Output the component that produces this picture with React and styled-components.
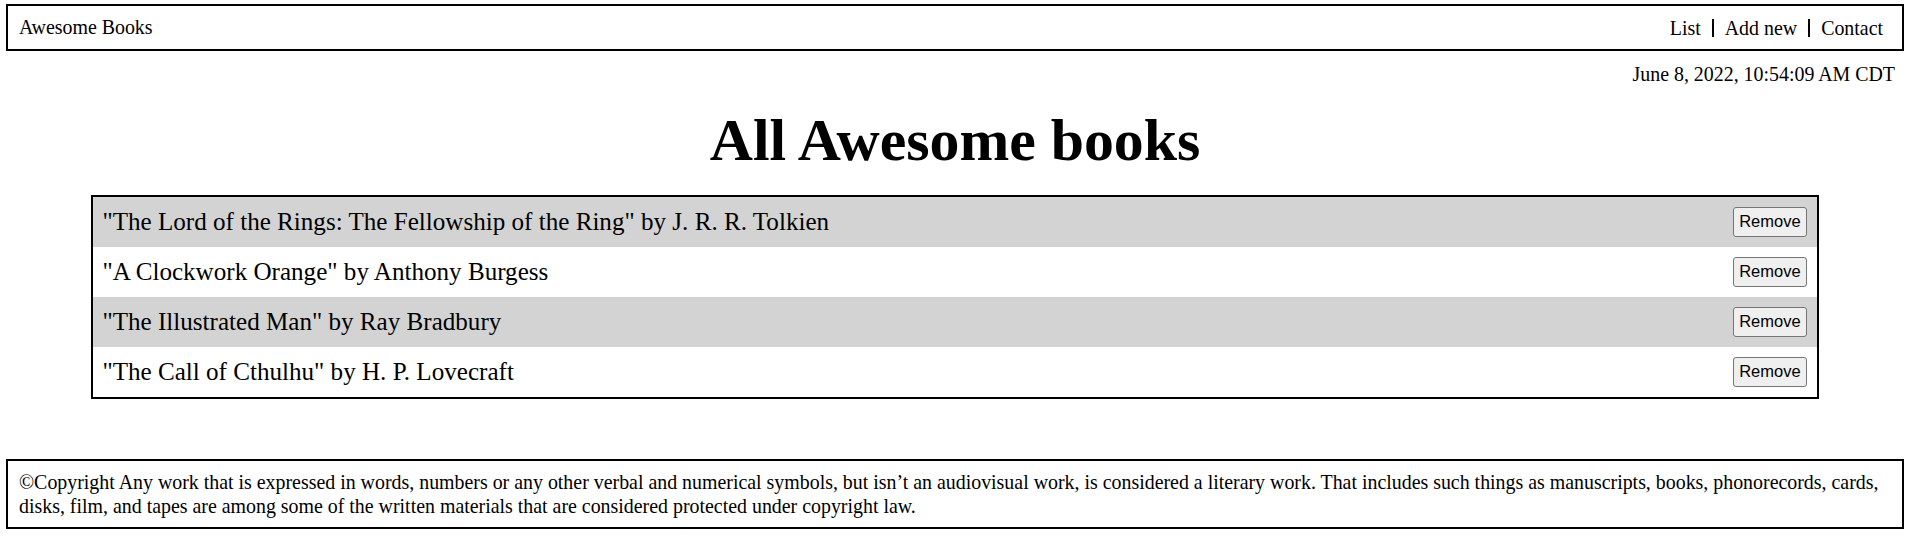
import React from "react";
import styled, { createGlobalStyle } from "styled-components";

const GlobalStyle = createGlobalStyle`
    body {
        margin: 0;
        font-family: "Liberation Serif", "Times New Roman", serif;
        color: #000;
        background: #fff;
    }
`;

const Page = styled.div`
    padding: 4px 6px 0;
`;

/**
 * Top bar with the brand on the left and the nav links on the right.
 */
const Header = styled.header`
    box-sizing: border-box;
    height: 47px;
    display: flex;
    align-items: center;
    justify-content: space-between;
    padding: 0 8px 0 11px;
    border: 2px solid #000;
    font-size: 19.9px;
`;

const Brand = styled.span`
    line-height: 1.15;
`;

const Nav = styled.ul`
    display: flex;
    align-items: center;
    margin: 0;
    padding: 0;
    list-style: none;
`;

const NavItem = styled.li`
    line-height: 18px;
    padding: 0 11px;
    border-left: ${(props) => (props.first ? "none" : "2px solid #000")};
`;

const DateLine = styled.p`
    margin: 12px 0 0;
    padding-right: 9px;
    text-align: right;
    font-size: 19.9px;
    line-height: 1.15;
`;

const Title = styled.h1`
    margin: 20px 0 20px;
    text-align: center;
    font-size: 59.8px;
    font-weight: 700;
    line-height: 1.15;
`;

/**
 * Book list box, striped rows.
 */
const BookList = styled.ul`
    box-sizing: border-box;
    width: 91%;
    margin: 0 auto;
    padding: 0;
    list-style: none;
    border: 2px solid #000;
`;

const BookRow = styled.li`
    box-sizing: border-box;
    height: 50px;
    display: flex;
    align-items: center;
    justify-content: space-between;
    padding: 0 10px 0 9px;
    font-size: 25.1px;
    background-color: ${(props) => (props.striped ? "#d3d3d3" : "#fff")};
`;

const RemoveButton = styled.button`
    box-sizing: border-box;
    height: 30px;
    padding: 0 5px;
    font-family: "Liberation Sans", Arial, sans-serif;
    font-size: 16.5px;
    color: #000;
    background-color: #efefef;
    border: 1px solid #767676;
    border-radius: 3px;
`;

const Footer = styled.footer`
    margin-top: 60px;
    padding: 9px 11px;
    border: 2px solid #000;
    font-size: 19.9px;
    line-height: 24px;
`;

const books = [
    { title: "The Lord of the Rings: The Fellowship of the Ring", author: "J. R. R. Tolkien" },
    { title: "A Clockwork Orange", author: "Anthony Burgess" },
    { title: "The Illustrated Man", author: "Ray Bradbury" },
    { title: "The Call of Cthulhu", author: "H. P. Lovecraft" },
];

export default function App() {
    return (
        <Page>
            <GlobalStyle />
            <Header>
                <Brand>Awesome Books</Brand>
                <Nav>
                    <NavItem first>List</NavItem>
                    <NavItem>Add new</NavItem>
                    <NavItem>Contact</NavItem>
                </Nav>
            </Header>
            <DateLine>June 8, 2022, 10:54:09 AM CDT</DateLine>
            <Title>All Awesome books</Title>
            <BookList>
                {books.map((book, i) => (
                    <BookRow key={book.title} striped={i % 2 === 0}>
                        <span>
                            "{book.title}" by {book.author}
                        </span>
                        <RemoveButton type="button">Remove</RemoveButton>
                    </BookRow>
                ))}
            </BookList>
            <Footer>
                ©Copyright Any work that is expressed in words, numbers or any other verbal and numerical
                symbols, but isn’t an audiovisual work, is considered a literary work. That includes such
                things as manuscripts, books, phonorecords, cards, disks, film, and tapes are among some of
                the written materials that are considered protected under copyright law.
            </Footer>
        </Page>
    );
}
